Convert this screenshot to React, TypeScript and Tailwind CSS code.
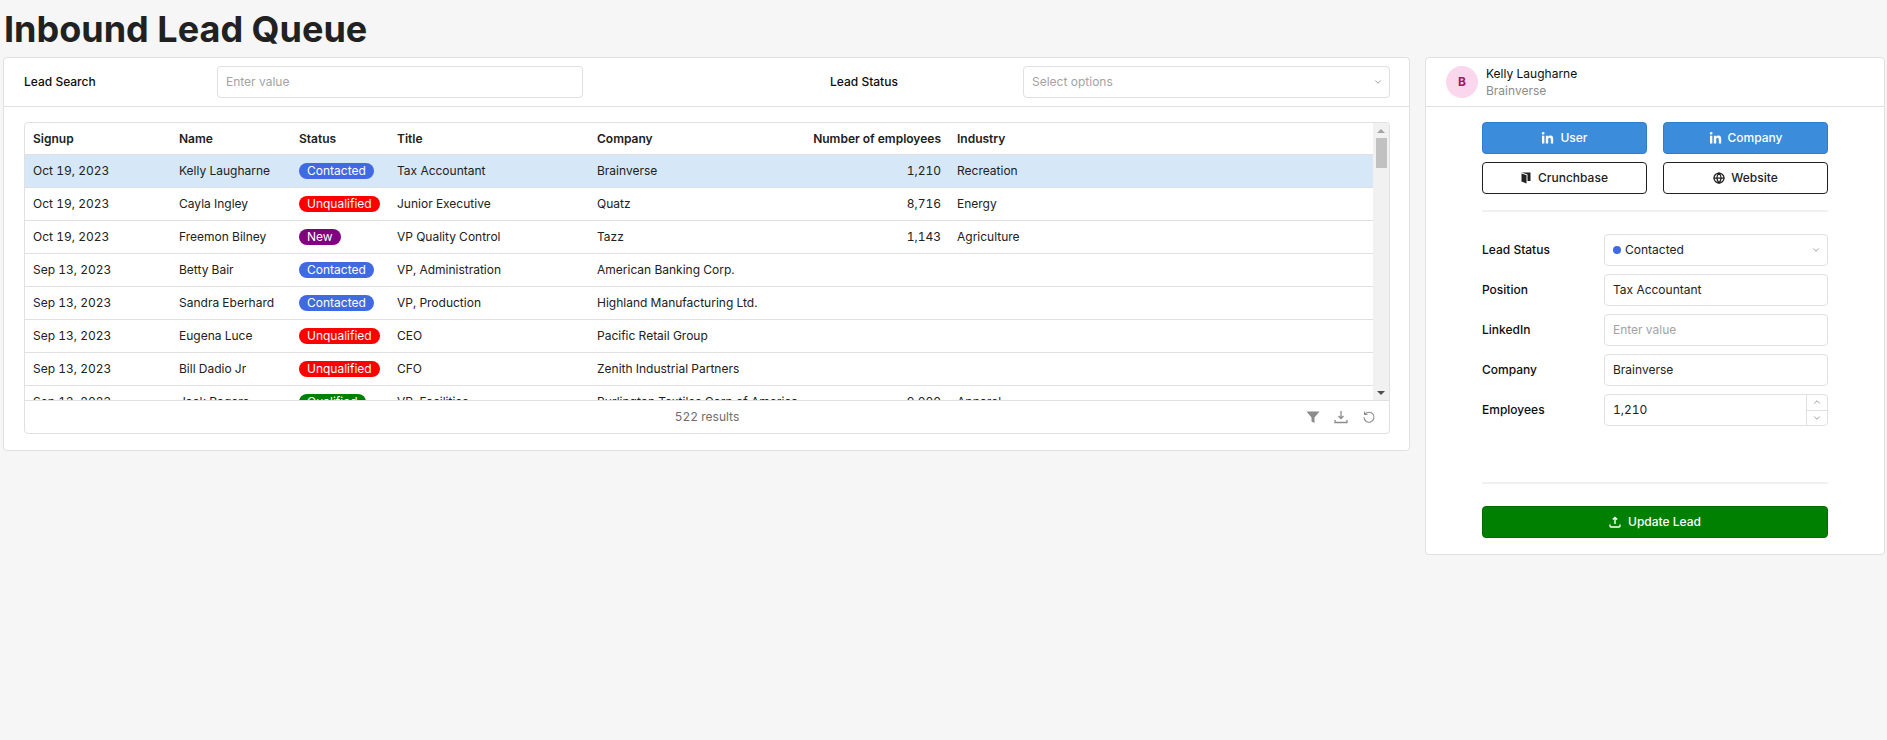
import { ChevronDown, ChevronUp, Globe } from "lucide-react";
import { FaLinkedinIn } from "react-icons/fa";

const font = "font-['Inter','Noto_Sans',sans-serif]";

const rows = [
  { date: "Oct 19, 2023", name: "Kelly Laugharne", status: "Contacted", title: "Tax Accountant", company: "Brainverse", employees: "1,210", industry: "Recreation", selected: true },
  { date: "Oct 19, 2023", name: "Cayla Ingley", status: "Unqualified", title: "Junior Executive", company: "Quatz", employees: "8,716", industry: "Energy" },
  { date: "Oct 19, 2023", name: "Freemon Bilney", status: "New", title: "VP Quality Control", company: "Tazz", employees: "1,143", industry: "Agriculture" },
  { date: "Sep 13, 2023", name: "Betty Bair", status: "Contacted", title: "VP, Administration", company: "American Banking Corp.", employees: "", industry: "" },
  { date: "Sep 13, 2023", name: "Sandra Eberhard", status: "Contacted", title: "VP, Production", company: "Highland Manufacturing Ltd.", employees: "", industry: "" },
  { date: "Sep 13, 2023", name: "Eugena Luce", status: "Unqualified", title: "CEO", company: "Pacific Retail Group", employees: "", industry: "" },
  { date: "Sep 13, 2023", name: "Bill Dadio Jr", status: "Unqualified", title: "CFO", company: "Zenith Industrial Partners", employees: "", industry: "" },
  { date: "Sep 13, 2023", name: "Jack Rogers", status: "Qualified", title: "VP, Facilities", company: "Burlington Textiles Corp of America", employees: "9,000", industry: "Apparel" },
];

function Pill({ status }: { status: string }) {
  const color =
    status === "Contacted"
      ? "bg-[#4169e1]"
      : status === "Unqualified"
        ? "bg-[#ff0000]"
        : status === "New"
          ? "bg-[#800080]"
          : "bg-[#008000]";
  return (
    <span className={`inline-flex h-4 items-center rounded-full px-2 text-xs text-white ${color}`}>
      {status}
    </span>
  );
}

function Field({ label, children }: { label: string; children: React.ReactNode }) {
  return (
    <div className="flex h-8 items-center">
      <div className="w-[122px] text-xs font-medium text-[#0d0d0d]">{label}</div>
      {children}
    </div>
  );
}

function Box({ text, muted }: { text: string; muted?: boolean }) {
  return (
    <div className={`flex h-8 flex-1 items-center rounded border border-[#e0e0e0] bg-white px-2 text-xs tabular-nums ${muted ? "text-[#a3a3a3]" : "text-[#222222]"}`}>
      {text}
    </div>
  );
}

export default function App() {
  return (
    <div className={`min-h-[740px] bg-[#f6f6f6] pl-[3px] pr-[2px] ${font}`}>
      <h1 className="flex h-[57px] items-center pl-px text-4xl font-bold text-[#212121]">Inbound Lead Queue</h1>
      <div className="flex items-start gap-[15px]">
        {/* LEFT CARD */}
        <div className="h-[394px] w-[1407px] rounded border border-[#e0e0e0] bg-white">
          <div className="flex h-[49px] items-center border-b border-[#e0e0e0] pl-5 pr-[19px]">
            <div className="w-[193px] text-xs font-medium text-[#0d0d0d]">Lead Search</div>
            <div className="flex h-8 w-[366px] items-center rounded border border-[#e0e0e0] px-2 text-xs text-[#a3a3a3]">Enter value</div>
            <div className="ml-[247px] w-[193px] text-xs font-medium text-[#0d0d0d]">Lead Status</div>
            <div className="flex h-8 w-[367px] items-center justify-between rounded border border-[#e0e0e0] pl-2 pr-1.5 text-xs text-[#a3a3a3]">
              Select options
              <ChevronDown className="size-2.5 text-[#8c8c8c]" />
            </div>
          </div>

          {/* TABLE */}
          <div className="ml-5 mr-[19px] mt-[15px] flex h-[312px] flex-col overflow-hidden rounded border border-[#e0e0e0] bg-white">
            <div className="flex h-[278px] border-b border-[#e0e0e0]">
              <div className="min-w-0 flex-1 overflow-hidden">
                <div className="flex h-[32px] items-center border-b border-[#e0e0e0] text-xs font-semibold text-[#212121]">
                  <div className="w-[146px] pl-2">Signup</div>
                  <div className="w-[120px] pl-2">Name</div>
                  <div className="w-[98px] pl-2">Status</div>
                  <div className="w-[200px] pl-2">Title</div>
                  <div className="w-[200px] pl-2">Company</div>
                  <div className="w-[160px] pr-2 text-right">Number of employees</div>
                  <div className="pl-2">Industry</div>
                </div>
                {rows.map((r) => (
                  <div
                    key={r.name}
                    className={`flex h-[33px] shrink-0 items-center border-b border-[#e0e0e0] text-xs tabular-nums text-[#212121] ${r.selected ? "bg-[#d6e7f7]" : ""}`}
                  >
                    <div className="w-[146px] pl-2">{r.date}</div>
                    <div className="w-[120px] pl-2">{r.name}</div>
                    <div className="w-[98px] pl-2"><Pill status={r.status} /></div>
                    <div className="w-[200px] pl-2">{r.title}</div>
                    <div className="w-[200px] whitespace-nowrap pl-2">{r.company}</div>
                    <div className="w-[160px] pr-2 text-right">{r.employees}</div>
                    <div className="pl-2">{r.industry}</div>
                  </div>
                ))}
              </div>
              {/* scrollbar */}
              <div className="flex w-4 flex-col items-center bg-[#f1f1f1]">
                <div className="mt-1.5 h-0 w-0 border-x-4 border-b-4 border-x-transparent border-b-[#a3a3a3]" />
                <div className="mt-[5px] h-[30px] w-[11px] bg-[#c1c1c1]" />
                <div className="mt-auto mb-[5px] h-0 w-0 border-x-4 border-t-4 border-x-transparent border-t-[#505050]" />
              </div>
            </div>
            <div className="relative flex flex-1 items-center justify-center text-xs tabular-nums text-[#6e6e6e]">
              522 results
              <div className="absolute right-[13px] flex items-center gap-3.5 text-[#8c8c8c]">
                <svg viewBox="0 0 14 14" className="size-3.5" fill="currentColor"><path d="M0.5 1.5h13L8.5 7.5v5.5l-3-1.5v-4z" /></svg>
                <svg viewBox="0 0 14 14" className="size-3.5" fill="none" stroke="currentColor" strokeWidth="1.3"><path d="M7 1v7M4.5 6l2.5 2.5L9.5 6M1 10v2.5h12V10" /></svg>
                <svg viewBox="0 0 14 14" className="size-3.5" fill="none" stroke="currentColor" strokeWidth="1.1"><path d="M3 4.2a5 5 0 1 1-1 3M2.5 1.5v3h3" /></svg>
              </div>
            </div>
          </div>
        </div>

        {/* RIGHT CARD */}
        <div className="h-[498px] flex-1 rounded border border-[#e0e0e0] bg-white">
          <div className="flex h-[49px] items-center gap-2 border-b border-[#e0e0e0] pl-5">
            <div className="flex size-8 items-center justify-center rounded-full bg-[#fad7ec] text-xs font-bold text-[#a3195b]">B</div>
            <div className="text-xs leading-[17px]">
              <div className="text-[#0d0d0d]">Kelly Laugharne</div>
              <div className="text-[#8c8c8c]">Brainverse</div>
            </div>
          </div>
          <div className="px-14 pt-[15px]">
            <div className="grid grid-cols-2 gap-x-4 gap-y-2">
              <button className="flex h-8 items-center justify-center gap-1.5 rounded border border-[#2f7cc9] bg-[#3b8ddc] text-xs font-medium text-white"><FaLinkedinIn className="size-[13px]" />User</button>
              <button className="flex h-8 items-center justify-center gap-1.5 rounded border border-[#2f7cc9] bg-[#3b8ddc] text-xs font-medium text-white"><FaLinkedinIn className="size-[13px]" />Company</button>
              <button className="flex h-8 items-center justify-center gap-[7px] rounded border border-[#212121] bg-white text-xs font-medium text-[#212121]">
                <svg viewBox="0 0 10 12" className="h-3 w-2.5" fill="currentColor"><path d="M0.5 0.5h9v8.5L6.5 9V2.5L0.5 0.5zM0.5 1.5l5 1.7v8.3l-5-2z" /></svg>
                Crunchbase
              </button>
              <button className="flex h-8 items-center justify-center gap-1.5 rounded border border-[#212121] bg-white text-xs font-medium text-[#212121]"><Globe className="size-3" strokeWidth={2.5} />Website</button>
            </div>
            <div className="mt-4 mb-[22px] h-0.5 bg-[#f0f0f0]" />
            <div className="flex flex-col gap-2">
              <Field label="Lead Status">
                <div className="flex h-8 flex-1 items-center justify-between rounded border border-[#e0e0e0] pl-2 pr-1.5 text-xs text-[#222222]">
                  <span className="flex items-center gap-1"><span className="size-2 rounded-full bg-[#4169e1]" />Contacted</span>
                  <ChevronDown className="size-2.5 text-[#8c8c8c]" />
                </div>
              </Field>
              <Field label="Position"><Box text="Tax Accountant" /></Field>
              <Field label="LinkedIn"><Box text="Enter value" muted /></Field>
              <Field label="Company"><Box text="Brainverse" /></Field>
              <Field label="Employees">
                <div className="flex h-8 flex-1 items-center justify-between overflow-hidden rounded border border-[#e0e0e0] pl-2 text-xs tabular-nums text-[#222222]">
                  1,210
                  <div className="flex h-full w-[21px] flex-col border-l border-[#e0e0e0] text-[#8c8c8c]">
                    <div className="flex flex-1 items-center justify-center border-b border-[#e0e0e0]"><ChevronUp className="size-2.5" /></div>
                    <div className="flex flex-1 items-center justify-center"><ChevronDown className="size-2.5" /></div>
                  </div>
                </div>
              </Field>
            </div>
            <div className="mt-14 h-0.5 bg-[#f0f0f0]" />
            <button className="mt-[22px] flex h-8 w-full items-center justify-center gap-[7px] rounded border border-[#006b00] bg-[#008000] text-xs font-medium text-white">
              <svg viewBox="0 0 12 12" className="size-3" fill="none" stroke="currentColor" strokeWidth="1.4"><path d="M6 8V1.5M3.8 3.6L6 1.5l2.2 2.1M1 8.5v1.5a1 1 0 0 0 1 1h8a1 1 0 0 0 1-1V8.5" /></svg>
              Update Lead
            </button>
          </div>
        </div>
      </div>
    </div>
  );
}
